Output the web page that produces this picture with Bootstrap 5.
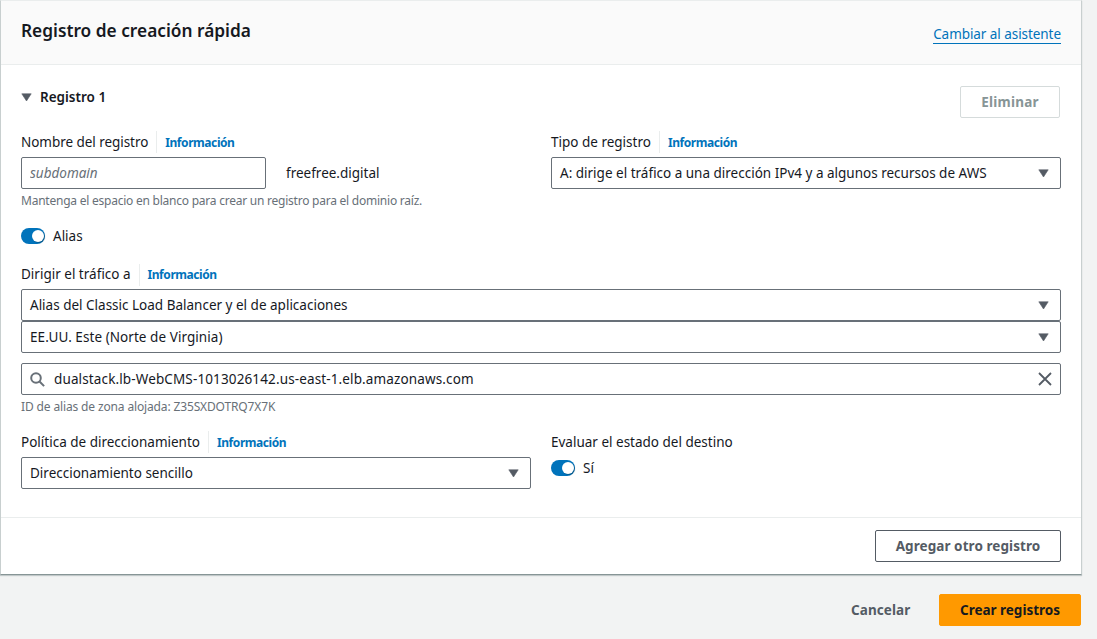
<!DOCTYPE html>
<html lang="es">
<head>
<meta charset="utf-8">
<meta name="viewport" content="width=device-width, initial-scale=1">
<title>Registro de creación rápida</title>
<link href="https://cdn.jsdelivr.net/npm/bootstrap@5.3.0/dist/css/bootstrap.min.css" rel="stylesheet">
<style>
body{font-family:"Noto Sans","Open Sans",sans-serif;font-size:13.5px;line-height:22px;color:#16191f;background:#f2f3f3;overflow:hidden}
.page{width:1082px}
.panel{border:1px solid #c8cfcf;border-top-color:#eaeded;border-bottom-color:#879596;border-radius:0;height:575px;box-shadow:0 1px 1px rgba(0,28,36,.2)}
.panel-head{height:64px;background:#fafafa;border-bottom:1px solid #eaeded;padding:0 20px}
.panel-head h2{font-size:17.3px;font-weight:600;line-height:22px;margin:19px 0 0}
.wizard{color:#0073bb;border-bottom:1px solid #0073bb;letter-spacing:-.06px;line-height:18px;height:19px;margin-top:24px;text-decoration:none}
.panel-main{padding:21px 20px 0;height:452px}
.panel-foot{border-top:1px solid #eaeded;padding:12px 20px 0}
.act{height:32px;border-radius:2px;padding:0;font-size:13.5px;font-weight:700;line-height:30px;letter-spacing:.07px;color:#545b64;white-space:nowrap}
.act-line{border:1px solid #545b64;background:#fff;width:186px}
.act-off,.act-off:disabled{border:1px solid #d5dbdb;color:#879596;background:#fff;opacity:1;width:100px;margin-right:1px;letter-spacing:.25px}
.act-main{background:#ff9900;color:#16191f;border:1px solid #ff9900;width:142px;letter-spacing:-.02px}
.act-text{border:0;width:59px;margin-right:29px}
.sect{font-weight:600;font-size:13.5px}
.tag{height:22px;line-height:21px;white-space:nowrap}
.tag-low>*{padding-top:1px}
.info{font-size:12px;font-weight:700;letter-spacing:-.43px;color:#0073bb;text-decoration:none;border-left:1px solid #eaeded;margin-left:8px;padding-left:8px;line-height:22px}
.field{height:32px;border:1px solid #687078;border-radius:2px;background:#fff;padding:0 8px;white-space:nowrap;color:#16191f;font-size:13.5px}
input.field::placeholder{color:#687078;font-style:italic;opacity:1}
input.field{width:245px}
.pick{padding-right:11px}
.host{letter-spacing:.13px}
.hint{font-size:12px;letter-spacing:-.235px;line-height:17px;height:18px;color:#687078}
.hint-id{letter-spacing:-.14px}
.cols{display:grid;grid-template-columns:510px 510px;column-gap:20px}
.switch{width:24px;height:16px;border-radius:8px;background:#0073bb;padding:2px 1px}
.switch i{width:12px;height:12px;border-radius:50%;background:#fff;box-shadow:1px 1px 1px rgba(0,28,36,.3)}
</style>
</head>
<body>
<svg class="d-none">
  <symbol id="down" viewBox="0 0 11 9"><path d="M.8.8h9.4L5.5 8z" fill="#545b64" stroke="#545b64" stroke-width=".6" stroke-linejoin="round"/></symbol>
</svg>
<main class="page">
  <section class="card panel">
    <header class="panel-head d-flex justify-content-between align-items-start flex-shrink-0">
      <h2>Registro de creación rápida</h2>
      <a class="wizard" href="#">Cambiar al asistente</a>
    </header>
    <div class="panel-main flex-shrink-0">
      <div class="d-flex justify-content-between align-items-start">
        <div class="d-flex align-items-center sect"><svg width="11" height="9" class="me-2"><use href="#down"/></svg><span>Registro 1</span></div>
        <button class="btn act act-off" disabled>Eliminar</button>
      </div>
      <div class="cols" style="margin-top:13px">
        <div>
          <div class="tag tag-low d-flex"><span style="letter-spacing:-.05px">Nombre del registro</span><a class="info" href="#">Información</a></div>
          <div class="d-flex align-items-center mt-1"><input class="field" placeholder="subdomain"><span style="margin-left:20px">freefree.digital</span></div>
          <div class="hint" style="margin-top:3px"><span>Mantenga el espacio en blanco para crear un registro para el dominio raíz.</span></div>
        </div>
        <div>
          <div class="tag tag-low d-flex"><span>Tipo de registro</span><a class="info" href="#">Información</a></div>
          <div class="field pick d-flex align-items-center justify-content-between mt-1"><span>A: dirige el tráfico a una dirección IPv4 y a algunos recursos de AWS</span><svg width="11" height="9"><use href="#down"/></svg></div>
        </div>
      </div>
      <div class="d-flex align-items-center gap-2" style="margin-top:15px"><span class="switch d-flex justify-content-end"><i></i></span><span>Alias</span></div>
      <div class="tag d-flex" style="margin-top:17px"><span>Dirigir el tráfico a</span><a class="info" href="#">Información</a></div>
      <div class="field pick d-flex align-items-center justify-content-between" style="margin-top:3px"><span>Alias del Classic Load Balancer y el de aplicaciones</span><svg width="11" height="9"><use href="#down"/></svg></div>
      <div class="field pick d-flex align-items-center justify-content-between"><span style="letter-spacing:.06px">EE.UU. Este (Norte de Virginia)</span><svg width="11" height="9"><use href="#down"/></svg></div>
      <div class="field d-flex align-items-center" style="margin-top:10px">
        <svg width="15" height="15" fill="none" stroke="#687078" stroke-width="2"><circle cx="6" cy="6" r="4.8"/><path d="M9.5 9.5l4.6 4.6"/></svg>
        <span class="host" style="margin-left:9px">dualstack.lb-WebCMS-1013026142.us-east-1.elb.amazonaws.com</span>
        <svg class="ms-auto" width="14" height="14" fill="none" stroke="#545b64" stroke-width="1.8"><path d="M1 1l12 12M13 1L1 13"/></svg>
      </div>
      <div class="hint hint-id" style="margin-top:3px"><span>ID de alias de zona alojada: Z35SXDOTRQ7X7K</span></div>
      <div class="cols" style="margin-top:15px">
        <div>
          <div class="tag tag-low d-flex"><span>Política de direccionamiento</span><a class="info" href="#">Información</a></div>
          <div class="field pick d-flex align-items-center justify-content-between mt-1"><span>Direccionamiento sencillo</span><svg width="11" height="9"><use href="#down"/></svg></div>
        </div>
        <div>
          <div class="tag tag-low d-flex"><span>Evaluar el estado del destino</span></div>
          <div class="d-flex align-items-center gap-2" style="margin-top:4px"><span class="switch d-flex justify-content-end"><i></i></span><span>Sí</span></div>
        </div>
      </div>
    </div>
    <footer class="panel-foot d-flex justify-content-end"><button class="btn act act-line">Agregar otro registro</button></footer>
  </section>
  <div class="d-flex justify-content-end" style="margin-top:19px;padding-right:1px">
    <button class="btn act act-text">Cancelar</button>
    <button class="btn act act-main">Crear registros</button>
  </div>
</main>
<script src="https://cdn.jsdelivr.net/npm/bootstrap@5.3.0/dist/js/bootstrap.bundle.min.js"></script>
</body>
</html>
